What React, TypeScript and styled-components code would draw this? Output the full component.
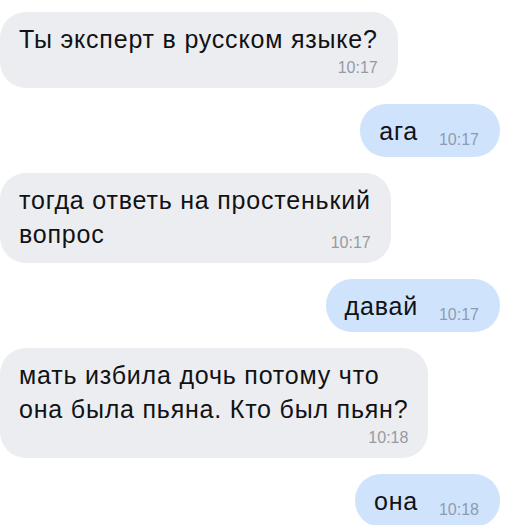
import styled, { createGlobalStyle } from "styled-components";

type Side = "in" | "out";

type Message = {
  side: Side;
  lines: Array<string>;
  time: string;
  timeInline: boolean;
};

const MESSAGES: Array<Message> = [
  { side: "in", lines: ["Ты эксперт в русском языке?"], time: "10:17", timeInline: false },
  { side: "out", lines: ["ага"], time: "10:17", timeInline: true },
  { side: "in", lines: ["тогда ответь на простенький", "вопрос"], time: "10:17", timeInline: true },
  { side: "out", lines: ["давай"], time: "10:17", timeInline: true },
  { side: "in", lines: ["мать избила дочь потому что", "она была пьяна. Кто был пьян?"], time: "10:18", timeInline: false },
  { side: "out", lines: ["она"], time: "10:18", timeInline: true },
];

const GlobalStyle = createGlobalStyle`
  html, body {
    margin: 0;
    padding: 0;
    background: #ffffff;
  }
  body {
    font-family: "Liberation Sans", Arial, sans-serif;
    -webkit-font-smoothing: antialiased;
  }
`;

const App = () => {
  return (
    <>
      <GlobalStyle />
      <Chat>
        {MESSAGES.map((message, index) => (
          <ChatBubble message={message} key={index} />
        ))}
      </Chat>
    </>
  );
};

export default App;

const ChatBubble = ({ message }: { message: Message }) => {
  const last = message.lines.length - 1;
  return (
    <Row side={message.side}>
      <Bubble side={message.side}>
        {message.lines.map((line, i) => (
          <Line key={i}>
            <span>{line}</span>
            {i === last && message.timeInline && (
              <Time side={message.side}>{message.time}</Time>
            )}
          </Line>
        ))}
        {!message.timeInline && (
          <TimeRow>
            <Time side={message.side}>{message.time}</Time>
          </TimeRow>
        )}
      </Bubble>
    </Row>
  );
};

const Chat = styled.div`
  display: flex;
  flex-direction: column;
  gap: 16px;
  width: 514px;
  height: 525px;
  padding: 12px 14px 0 0;
  box-sizing: border-box;
  overflow: hidden;
`;

const Row = styled.div<{ side: Side }>`
  display: flex;
  justify-content: ${({ side }) => (side === "out" ? "flex-end" : "flex-start")};
`;

const Bubble = styled.div<{ side: Side }>`
  display: flex;
  flex-direction: column;
  padding: ${({ side }) => (side === "out" ? "10px 21px 9px 19px" : "10px 20px 12px 19px")};
  border-radius: 26px;
  background-color: ${({ side }) => (side === "out" ? "#cfe4fc" : "#ecedf1")};
  color: #111214;
`;

const Line = styled.div`
  display: flex;
  align-items: flex-end;
  justify-content: space-between;
  gap: 21px;
  font-size: 25px;
  line-height: 34px;
  letter-spacing: 0.8px;
  white-space: nowrap;
`;

const TimeRow = styled.div`
  display: flex;
  justify-content: flex-end;
  margin-top: 4px;
`;

const Time = styled.span<{ side: Side }>`
  font-size: 16px;
  line-height: 16px;
  letter-spacing: 0;
  color: ${({ side }) => (side === "out" ? "#8d9bb0" : "#959aa3")};
`;
